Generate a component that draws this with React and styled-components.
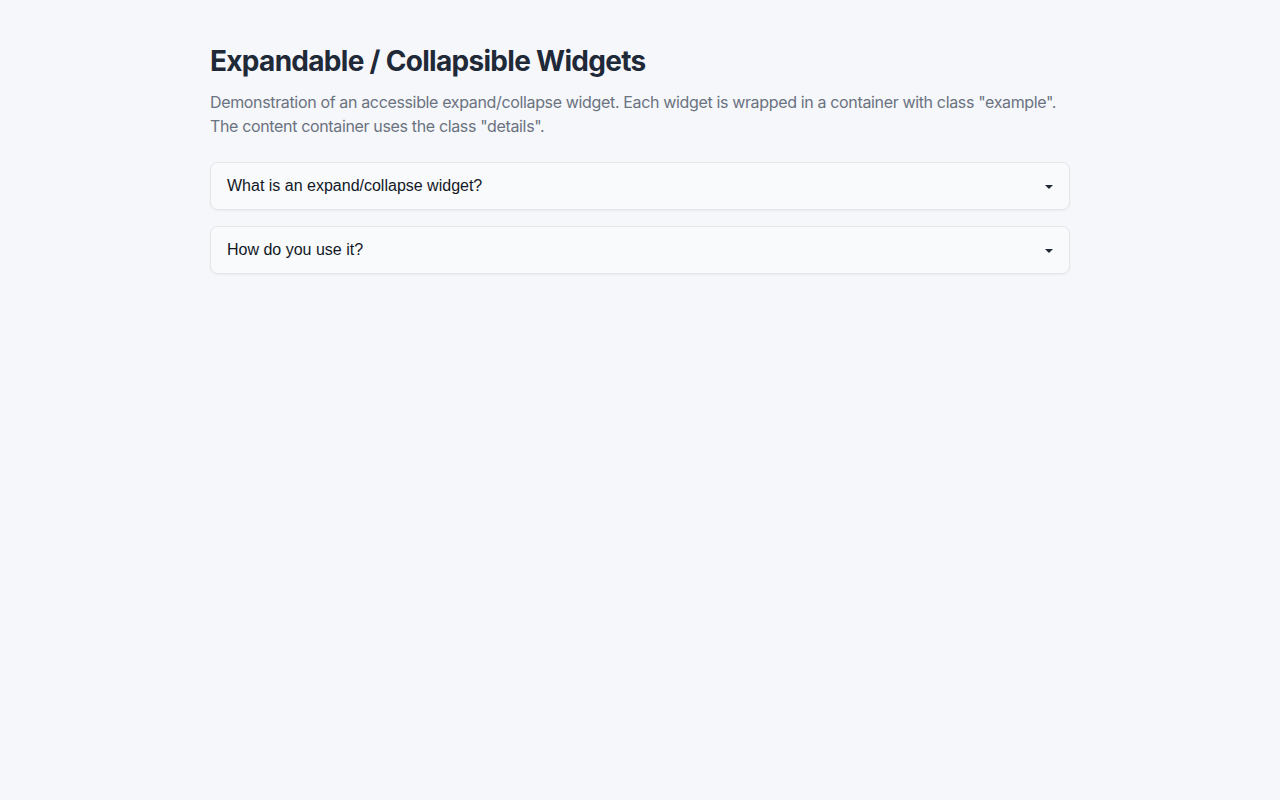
import React from 'react'
import styled, { createGlobalStyle } from 'styled-components'

const GlobalStyle = createGlobalStyle`
  html, body {
    margin: 0;
    padding: 0;
    background: #f5f7fb;
  }
  body {
    font-family: Inter, "Noto Sans", sans-serif;
  }
`

const Page = styled.main`
  width: 860px;
  margin: 0 auto;
  padding: 44px 0;
`

const Title = styled.h1`
  margin: 0;
  font-size: 28px;
  line-height: 34px;
  font-weight: 700;
  letter-spacing: -0.7px;
  color: #1f2937;
`

const Intro = styled.p`
  margin: 12px 0 24px;
  font-size: 16px;
  line-height: 24px;
  letter-spacing: -0.35px;
  color: #6b7280;
`

const List = styled.div`
  display: flex;
  flex-direction: column;
  gap: 16px;
`

const Example = styled.div`
  background: #f9fafb;
  border: 1px solid #e5e7eb;
  border-radius: 8px;
  box-shadow: 0 1px 2px rgba(0, 0, 0, 0.05);
`

const Toggle = styled.button`
  width: 100%;
  height: 46px;
  display: flex;
  align-items: center;
  justify-content: space-between;
  padding: 0 16px;
  background: transparent;
  border: 0;
  font-family: "Liberation Sans", Arial, sans-serif;
  font-size: 16px;
  color: #111827;
  cursor: pointer;
  text-align: left;
`

const Caret = styled.span`
  width: 0;
  height: 0;
  border-left: 4px solid transparent;
  border-right: 4px solid transparent;
  border-top: 4px solid #1f2937;
  margin-top: 2px;
`

const Details = styled.div`
  padding: 0 16px 16px;
  color: #374151;
`

const items = [
  { q: 'What is an expand/collapse widget?' },
  { q: 'How do you use it?' },
]

const App = () => {
  return (
    <>
      <GlobalStyle />
      <Page>
        <Title>Expandable / Collapsible Widgets</Title>
        <Intro>
          Demonstration of an accessible expand/collapse widget. Each widget is wrapped in a container with class "example".
          <br />
          The content container uses the class "details".
        </Intro>
        <List>
          {items.map((item) => (
            <Example className="example" key={item.q}>
              <Toggle aria-expanded="false">
                {item.q}
                <Caret />
              </Toggle>
              <Details className="details" hidden />
            </Example>
          ))}
        </List>
      </Page>
    </>
  )
}

export default App
